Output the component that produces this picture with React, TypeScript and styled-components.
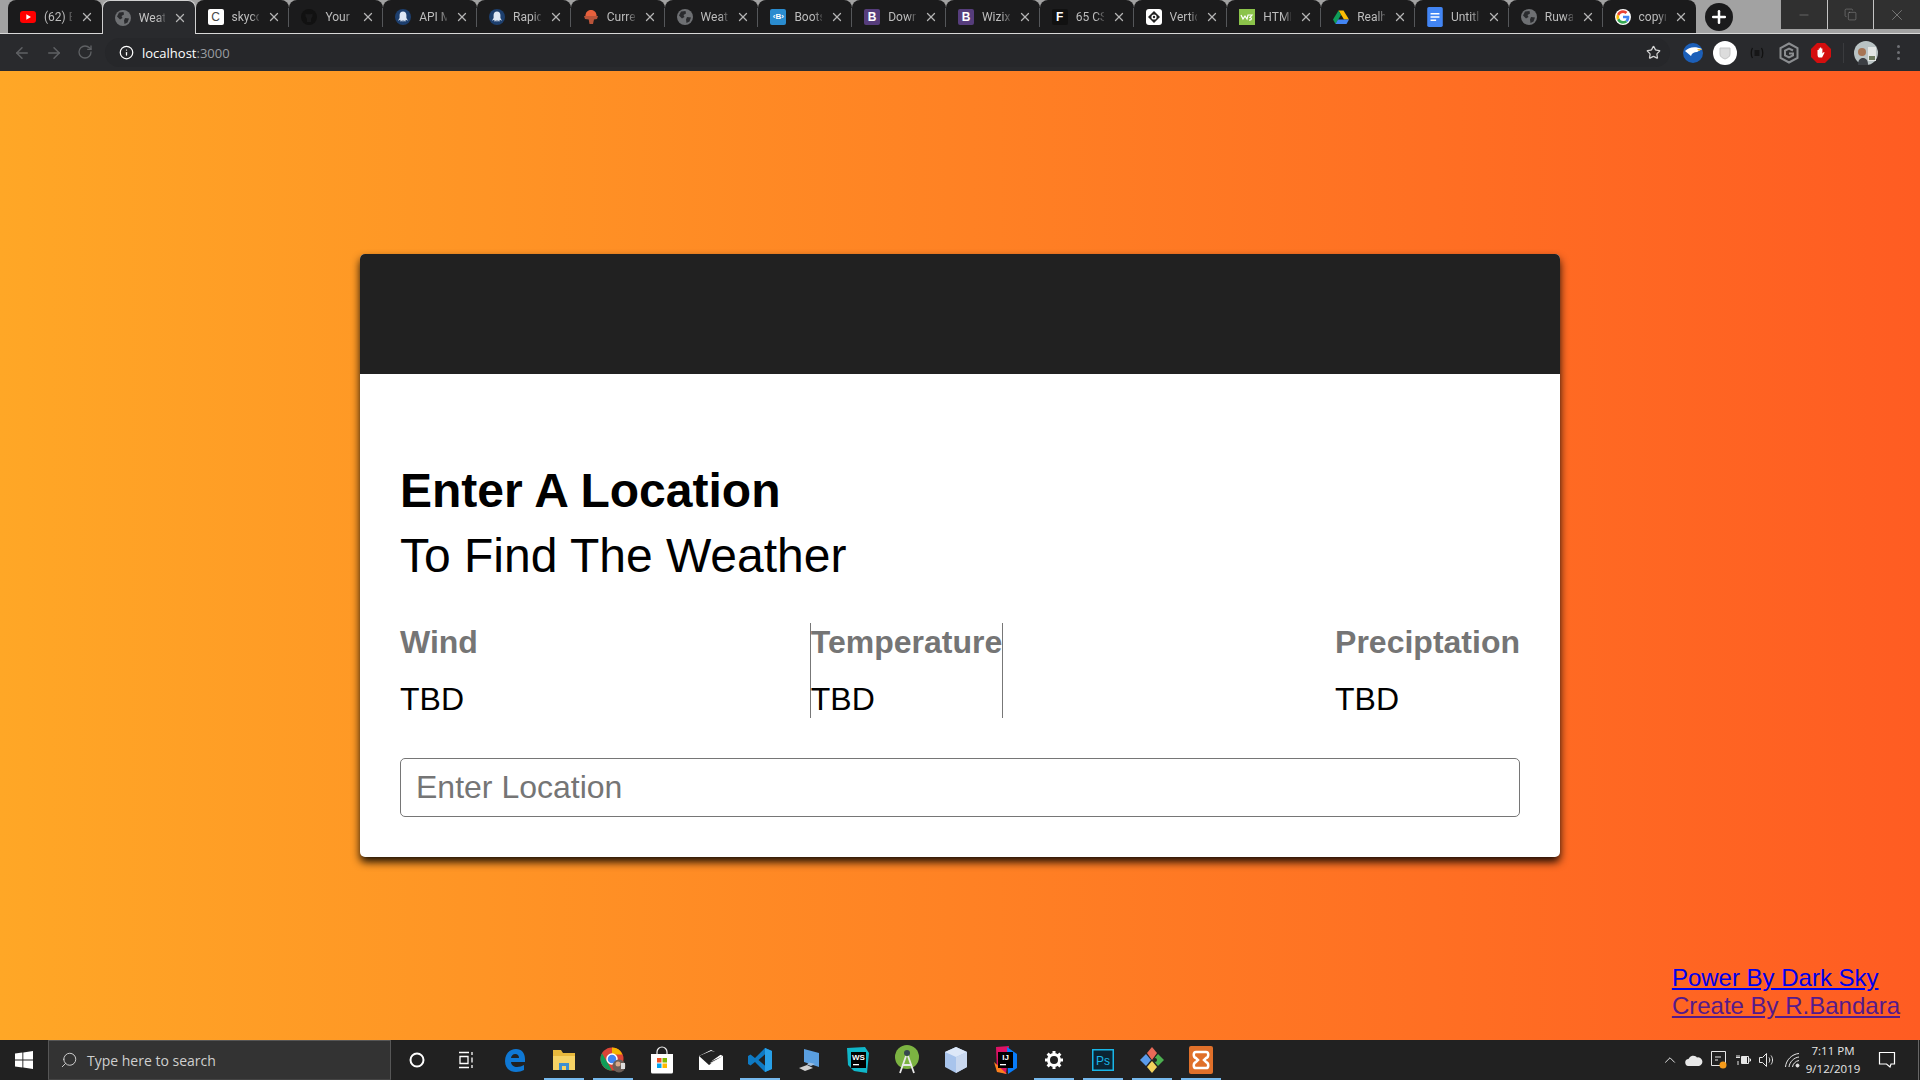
import React from "react";
import styled, { createGlobalStyle } from "styled-components";
import { ArrowLeft, ArrowRight, ChevronUp, Info, Minus, Plus, RotateCw, Search, Star, X, Copy } from "lucide-react";

const GlobalStyle = createGlobalStyle`
  html, body {
    margin: 0;
    height: 100%;
    overflow: hidden;
  }
  #root {
    height: 100%;
  }
`;

const Shell = styled.div`
  display: flex;
  flex-direction: column;
  height: 100vh;
  font-family: "Liberation Sans", Arial, sans-serif;
`;

/* browser chrome */

const TabStrip = styled.div`
  display: flex;
  align-items: stretch;
  height: 33px;
  padding-left: 8px;
  background: #a2a2a2;
  border-bottom: 1px solid #d8d8d8;
`;

const Tab = styled.div<{ $active?: boolean; $noDivider?: boolean }>`
  position: relative;
  box-sizing: border-box;
  display: flex;
  align-items: center;
  flex: 0 0 93.8px;
  min-width: 0;
  gap: 8px;
  padding: 0 8px 0 12px;
  margin-bottom: ${(p) => (p.$active ? "-1px" : "0")};
  border-radius: 8px 8px 0 0;
  background: ${(p) => (p.$active ? "#292a2d" : "#1b1b1c")};
  border: ${(p) => (p.$active ? "1px solid #d0d0d0" : "none")};
  border-bottom: none;
  color: ${(p) => (p.$active ? "#c4c4c4" : "#bdbdbd")};
  font-family: Roboto, sans-serif;
  font-size: 12px;

  &::after {
    content: "";
    display: ${(p) => (p.$active || p.$noDivider ? "none" : "block")};
    position: absolute;
    right: 0;
    top: 8px;
    bottom: 6px;
    width: 1px;
    background: #55575a;
  }
`;

const TabTitle = styled.span`
  flex: 1;
  min-width: 0;
  white-space: nowrap;
  -webkit-mask-image: linear-gradient(to right, #000 70%, rgba(0, 0, 0, 0.25) 100%);
  mask-image: linear-gradient(to right, #000 70%, rgba(0, 0, 0, 0.25) 100%);
`;

const TabClose = styled(X)`
  flex: none;
  width: 14px;
  height: 14px;
  color: #b4b4b4;
`;

const NewTab = styled.div`
  flex: none;
  display: flex;
  align-items: center;
  justify-content: center;
  width: 28px;
  height: 28px;
  margin: 3px 0 0 9px;
  border-radius: 50%;
  background: #1b1b1c;
  color: #fff;
`;

const WindowControls = styled.div`
  flex: none;
  display: flex;
  margin-left: auto;
  height: 29px;
  background: #303030;
`;

const WindowButton = styled.div`
  display: flex;
  align-items: center;
  justify-content: center;
  width: 45.6px;
  color: #8b8b8b;

  & + & {
    border-left: 1px solid #c4c4c4;
  }
`;

const Toolbar = styled.div`
  display: flex;
  align-items: center;
  height: 37px;
  background: #292a2d;
  color: #5f6164;
`;

const NavButtons = styled.div`
  display: flex;
  gap: 14px;
  padding-left: 13px;
`;

const Omnibox = styled.div`
  display: flex;
  align-items: center;
  flex: 1;
  gap: 8px;
  height: 29px;
  margin-left: 12px;
  padding: 0 9px 0 14px;
  border-radius: 15px;
  background: #26272a;
  color: #fff;
  font-family: "Open Sans", sans-serif;
  font-size: 13px;
`;

const Port = styled.span`
  color: #9a9da1;
`;

const StarSlot = styled.span`
  display: flex;
  margin-left: auto;
  color: #d4d4d4;
`;

const Extensions = styled.div`
  display: flex;
  align-items: center;
  width: 250px;
  padding-left: 7px;
  box-sizing: border-box;
`;

const ExtensionSlot = styled.span<{ $width?: number }>`
  flex: none;
  display: flex;
  align-items: center;
  justify-content: center;
  width: ${(p) => p.$width ?? 32}px;
`;

const ExtensionDivider = styled.span`
  width: 1px;
  height: 20px;
  background: #3a3b3e;
`;

const MenuDots = styled.span`
  display: flex;
  flex-direction: column;
  gap: 3px;

  i {
    width: 3px;
    height: 3px;
    border-radius: 50%;
    background: #6f7175;
  }
`;

const LetterIcon = styled.span<{ $bg: string; $fg: string; $light?: boolean; $small?: boolean }>`
  flex: none;
  display: flex;
  align-items: center;
  justify-content: center;
  width: 16px;
  height: 16px;
  border-radius: 2px;
  background: ${(p) => p.$bg};
  color: ${(p) => p.$fg};
  font-family: "Liberation Sans", sans-serif;
  font-size: ${(p) => (p.$small ? "8px" : "12px")};
  font-weight: ${(p) => (p.$light ? 400 : 700)};
`;

/* weather page */

const Page = styled.main`
  position: relative;
  flex: 1;
  display: flex;
  align-items: center;
  justify-content: center;
  background: linear-gradient(to right, #ffa726, #ff5c22);
`;

const Card = styled.section`
  width: 1200px;
  border-radius: 5px;
  background: #fff;
  box-shadow: 0 5px 8px rgba(0, 0, 0, 0.9);
  overflow: hidden;
`;

const CardHeader = styled.header`
  height: 120px;
  background: #212121;
`;

const CardBody = styled.div`
  padding: 84px 40px 40px;
`;

const Heading = styled.h1`
  margin: 0;
  font-size: 48px;
  font-weight: 700;
  line-height: 65px;
  color: #000;
`;

const SubHeading = styled.h2`
  margin: 0;
  font-size: 48px;
  font-weight: 400;
  line-height: 65px;
  color: #000;
`;

const Stats = styled.div`
  display: flex;
  justify-content: space-between;
  margin-top: 35px;
`;

const Stat = styled.div<{ $divided?: boolean }>`
  padding: 0;
  border-left: ${(p) => (p.$divided ? "1px solid #777" : "none")};
  border-right: ${(p) => (p.$divided ? "1px solid #777" : "none")};
`;

const StatLabel = styled.div`
  height: 57px;
  line-height: 38px;
  font-size: 32px;
  font-weight: 700;
  color: #757575;
`;

const StatValue = styled.div`
  height: 38px;
  line-height: 38px;
  font-size: 32px;
  color: #000;
`;

const LocationInput = styled.input`
  display: block;
  box-sizing: border-box;
  width: 100%;
  height: 59px;
  margin-top: 40px;
  padding: 0 15px;
  border: 1px solid #767676;
  border-radius: 5px;
  font-family: inherit;
  font-size: 32px;

  &::placeholder {
    color: #757575;
  }
`;

const Credits = styled.div`
  position: absolute;
  right: 20px;
  bottom: 20px;
  display: flex;
  flex-direction: column;
  font-size: 24px;
  line-height: 28px;
`;

const CreditLink = styled.a<{ $visited?: boolean }>`
  color: ${(p) => (p.$visited ? "#551a8b" : "#0000ee")};
`;

/* windows taskbar */

const Taskbar = styled.footer`
  display: flex;
  align-items: stretch;
  height: 40px;
  background: #212121;
  color: #fff;
  font-family: "Open Sans", sans-serif;
`;

const StartButton = styled.div`
  display: flex;
  align-items: center;
  justify-content: center;
  width: 48px;
`;

const SearchBox = styled.div`
  box-sizing: border-box;
  display: flex;
  align-items: center;
  gap: 9px;
  width: 343px;
  padding-left: 11px;
  background: #333;
  border: 1px solid #565656;
  border-bottom-color: #444;
  color: #cfcfcf;
  font-size: 14px;
`;

const TaskIcons = styled.div`
  display: flex;
  margin-left: 1px;
`;

const TaskButton = styled.div<{ $running?: boolean }>`
  display: flex;
  align-items: center;
  justify-content: center;
  width: 40px;
  margin: 0 4.5px;
  box-sizing: border-box;
  padding-top: 2px;
  border-bottom: 2px solid ${(p) => (p.$running ? "#76b9ed" : "transparent")};
`;

const Tray = styled.div`
  display: flex;
  align-items: center;
  margin-left: auto;
`;

const TrayIcon = styled.span`
  display: flex;
  justify-content: center;
  width: 24.4px;
  color: #e6e6e6;
`;

const Clock = styled.div`
  width: 58px;
  text-align: center;
  font-size: 11.5px;
  line-height: 18px;
  color: #e6e6e6;
`;

const NotifySlot = styled.span`
  display: flex;
  justify-content: center;
  width: 32px;
  margin: 0 15px 0 9px;
`;

const ShowDesktop = styled.span`
  box-sizing: border-box;
  align-self: stretch;
  width: 2px;
  border-left: 1px solid #666;
`;

const Globe = ({ size = 16 }: { size?: number }) => (
  <svg width={size} height={size} viewBox="0 0 16 16" style={{ flex: "none" }}>
    <circle cx="8" cy="8" r="8" fill="#6e7073" />
    <path d="M4 2.5 8.5 2 9 4.5 6.5 6 7.5 8 5 9.5 2 6.5ZM10 8l4 .5-1.5 4L9.5 14 9 10.5Z" fill="#2a2b2e" />
  </svg>
);

const Ghost = () => (
  <svg width="16" height="16" viewBox="0 0 16 16" style={{ flex: "none" }}>
    <circle cx="8" cy="8" r="8" fill="#1d3f6e" />
    <path d="M8 2.5c2.2 0 3.4 1.7 3.4 3.6v3l1.6 2.6-2.2-1-.7 2.3L8.8 11 8 13.2 7.2 11l-1.3 2-.7-2.3-2.2 1 1.6-2.6v-3C4.6 4.2 5.8 2.5 8 2.5Z" fill="#dfe8f5" />
  </svg>
);

function TabIcon({ kind }: { kind: string }) {
  switch (kind) {
    case "youtube":
      return (
        <svg width="16" height="16" viewBox="0 0 16 16" style={{ flex: "none" }}>
          <rect y="2" width="16" height="12" rx="3" fill="#f00" />
          <path d="M6.3 5.2 11 8l-4.7 2.8Z" fill="#fff" />
        </svg>
      );
    case "github":
      return (
        <svg width="16" height="16" viewBox="0 0 16 16" style={{ flex: "none" }}>
          <circle cx="8" cy="8" r="8" fill="#111" />
          <path d="M4.5 4.5 6 5.3h4l1.5-.8v3L10 10v3H6v-3L4.5 7.5Z" fill="#1b1b1c" />
        </svg>
      );
    case "ghost":
      return <Ghost />;
    case "currency":
      return (
        <svg width="16" height="16" viewBox="0 0 16 16" style={{ flex: "none" }}>
          <path d="M8 1c3.4 0 5.6 2.6 5.6 6H2.400C2.400 3.600 4.600 1 8 1Z" fill="#e8603c" />
          <path d="M1 7h14l-1 3-3 .5L10 15H6.500l-.8-4.500L2 10Z" fill="#b9543a" />
        </svg>
      );
    case "skyc":
      return <LetterIcon $bg="#fff" $fg="#444" $light>C</LetterIcon>;
    case "bootstrap":
      return <LetterIcon $bg="#2a8ccf" $fg="#fff" $small>‹B›</LetterIcon>;
    case "b":
      return <LetterIcon $bg="#563d7c" $fg="#fff">B</LetterIcon>;
    case "f":
      return <LetterIcon $bg="#111" $fg="#fff">F</LetterIcon>;
    case "vertic":
      return (
        <svg width="16" height="16" viewBox="0 0 16 16" style={{ flex: "none" }}>
          <rect width="16" height="16" rx="3" fill="#fff" />
          <path d="M8 2 14 8 8 14 2 8Z" fill="#222" />
          <circle cx="8" cy="8" r="2.600" fill="#fff" />
          <circle cx="8" cy="8" r="1.200" fill="#222" />
        </svg>
      );
    case "w3":
      return (
        <svg width="16" height="16" viewBox="0 0 16 16" style={{ flex: "none" }}>
          <rect width="16" height="16" fill="#8bc34a" />
          <path d="M2 6 4 10l2-3 2 3 1-4h4l-2 2.500c2 0 2 3-1 2.500" fill="none" stroke="#fff" strokeWidth="1.200" />
        </svg>
      );
    case "drive":
      return (
        <svg width="16" height="16" viewBox="0 0 16 16" style={{ flex: "none" }}>
          <path d="M5.500 1.500h5L16 10.500h-5Z" fill="#fbbc04" />
          <path d="M5.500 1.500 0 10.500 2.500 15 8 6Z" fill="#0f9d58" />
          <path d="M5 10.500h11L13.500 15h-11Z" fill="#4285f4" />
        </svg>
      );
    case "docs":
      return (
        <svg width="16" height="20" viewBox="0 0 14 18" style={{ flex: "none" }}>
          <rect width="14" height="18" rx="1.500" fill="#4285f4" />
          <path d="M3 6h8M3 9h8M3 12h5" stroke="#fff" strokeWidth="1.400" />
        </svg>
      );
    case "google":
      return (
        <svg width="16" height="16" viewBox="0 0 48 48" style={{ flex: "none" }}>
          <circle cx="24" cy="24" r="24" fill="#fff" />
          <path d="M43 24.500c0-1.400-.1-2.700-.4-4H24v7.600h10.800c-.5 2.500-1.900 4.600-4 6l6.300 4.900c3.700-3.400 5.900-8.500 5.900-14.500Z" fill="#4285f4" />
          <path d="M24 44c5.300 0 9.800-1.800 13.100-4.900l-6.300-4.900c-1.800 1.200-4.100 1.900-6.800 1.900-5.200 0-9.600-3.500-11.200-8.200L6.300 32.800C9.500 39.400 16.200 44 24 44Z" fill="#34a853" />
          <path d="M12.800 27.900c-.8-2.500-.8-5.300 0-7.800l-6.500-5c-2.800 5.500-2.800 12.300 0 17.800Z" fill="#fbbc05" />
          <path d="M24 12c2.900 0 5.500 1 7.500 2.900l5.600-5.600C33.700 6.100 29.200 4 24 4 16.200 4 9.500 8.600 6.300 15.100l6.500 5C14.400 15.500 18.800 12 24 12Z" fill="#ea4335" />
        </svg>
      );
    default:
      return <Globe />;
  }
}

const tabs = [
  { kind: "youtube", title: "(62) B" },
  { kind: "globe", title: "Weat", active: true },
  { kind: "skyc", title: "skyco" },
  { kind: "github", title: "Your" },
  { kind: "ghost", title: "API M" },
  { kind: "ghost", title: "Rapid" },
  { kind: "currency", title: "Curre" },
  { kind: "globe", title: "Weat" },
  { kind: "bootstrap", title: "Boots" },
  { kind: "b", title: "Down" },
  { kind: "b", title: "Wizix" },
  { kind: "f", title: "65 CS" },
  { kind: "vertic", title: "Vertic" },
  { kind: "w3", title: "HTML" },
  { kind: "drive", title: "Realh" },
  { kind: "docs", title: "Untitl" },
  { kind: "globe", title: "Ruwa" },
  { kind: "google", title: "copyr" },
];

const taskApps: { icon: React.ReactNode; running?: boolean }[] = [
  { icon: <svg width="20" height="20" viewBox="0 0 20 20"><circle cx="10" cy="10" r="6.500" fill="none" stroke="#fff" strokeWidth="2" /></svg> },
  {
    icon: (
      <svg width="18" height="18" viewBox="0 0 18 18" fill="none" stroke="#fff" strokeWidth="1.300">
        <path d="M2 1.500h10M2 16.500h10M3 5.500h8v7H3ZM15 1v3M15 6.500v5M15 14v3" />
      </svg>
    ),
  },
  {
    icon: (
      <svg width="22" height="24" viewBox="0 0 22 24">
        <path d="M1 13C1 6 5.500 1 12 1c5.600 0 9 4 9 10v3H7c.3 3.500 3 5 6 5 2.500 0 5-.8 7-2v5c-2.200 1.200-5 2-8 2-6.500 0-11-4-11-11Zm6-3h8c0-2.500-1.500-4-3.800-4C8.800 6 7.300 7.800 7 10Z" fill="#0f78d4" />
      </svg>
    ),
  },
  {
    running: true,
    icon: (
      <svg width="24" height="22" viewBox="0 0 24 22">
        <path d="M1 1h8l2 3h12v17H1Z" fill="#e8b93c" />
        <rect x="1" y="7" width="22" height="14" fill="#f6d365" />
        <path d="M7 21v-7h10v7h-3v-4h-4v4Z" fill="#3d8fd1" />
      </svg>
    ),
  },
  {
    running: true,
    icon: (
      <svg width="26" height="26" viewBox="0 0 26 26">
        <circle cx="12" cy="12" r="11.500" fill="#db4437" />
        <path d="M12 23.500A11.500 11.500 0 0 1 2 6.300L8 16.500Z" fill="#0f9d58" />
        <path d="M12 .5a11.500 11.500 0 0 1 10.500 7H12Z" fill="#f4b400" />
        <circle cx="12" cy="12" r="5" fill="#4285f4" stroke="#fff" strokeWidth="1.500" />
        <circle cx="19" cy="19" r="6.500" fill="#6d5f58" />
        <circle cx="18" cy="17" r="2.500" fill="#d7a98a" />
        <path d="M21 16h4v6h-4Z" fill="#ddd" />
      </svg>
    ),
  },
  {
    icon: (
      <svg width="24" height="28" viewBox="0 0 24 28">
        <path d="M7 9V6a5 5 0 0 1 10 0v3" fill="none" stroke="#eee" strokeWidth="1.200" />
        <path d="M1 8h22v18a1.500 1.500 0 0 1-1.500 1.500h-19A1.500 1.500 0 0 1 1 26Z" fill="#fff" />
        <rect x="7" y="12" width="4.500" height="4.500" fill="#f25022" />
        <rect x="12.500" y="12" width="4.500" height="4.500" fill="#7fba00" />
        <rect x="7" y="17.500" width="4.500" height="4.500" fill="#00a4ef" />
        <rect x="12.500" y="17.500" width="4.500" height="4.500" fill="#ffb900" />
      </svg>
    ),
  },
  {
    icon: (
      <svg width="24" height="20" viewBox="0 0 24 20">
        <path d="M0 6 12 0l12 6v14H0Z" fill="#fff" />
        <path d="M0 6l10 9L24 6 12 11.500 24 3 12 1Z" fill="#212121" />
        <path d="M24 20 11 13l13-7Z" fill="#fff" opacity=".9" />
      </svg>
    ),
  },
  {
    running: true,
    icon: (
      <svg width="24" height="26" viewBox="0 0 24 26">
        <path d="M17 1 24 4v18l-7 3-10-10-4.500 3.500L0 17V9l2.500-1.500L7 11Z" fill="#0e7ac4" />
        <path d="M17 7.500 10.500 13l6.500 5.500Z" fill="#212121" />
        <path d="M17 1 24 4v18l-7 3Z" fill="#28a0e8" />
        <path d="M17 7.500 12 13l5 5.500Z" fill="#212121" />
      </svg>
    ),
  },
  {
    icon: (
      <svg width="24" height="26" viewBox="0 0 24 26">
        <path d="M7 2 22 6v14L7 15Z" fill="#5a9fe0" />
        <path d="M2 21l8-3 6 3-8 3Z" fill="#cfcfcf" />
        <path d="M12 15.500 18 17l-4 2-4-1.500Z" fill="#9fbfe0" />
      </svg>
    ),
  },
  {
    icon: (
      <svg width="24" height="28" viewBox="0 0 24 28">
        <path d="M1 2l18-1 4 6-2 20-13-2-6-6Z" fill="#10b7c9" />
        <rect x="5" y="6" width="15" height="16" fill="#000" />
        <text x="12.500" y="14" fontFamily="Liberation Sans" fontSize="8" fontWeight="700" fill="#fff" textAnchor="middle">WS</text>
        <rect x="7" y="18" width="6" height="1.300" fill="#fff" />
      </svg>
    ),
  },
  {
    icon: (
      <svg width="24" height="30" viewBox="0 0 24 30">
        <circle cx="12" cy="12" r="12" fill="#7cb342" />
        <circle cx="12" cy="8" r="3" fill="#37474f" />
        <path d="M11 11 5 28M13 11l6 17M7 20h10" stroke="#e8e8e8" strokeWidth="1.800" fill="none" />
      </svg>
    ),
  },
  {
    icon: (
      <svg width="22" height="26" viewBox="0 0 22 26">
        <path d="M11 0 22 5v15l-11 6L0 20V5Z" fill="#a8c4ec" />
        <path d="M11 0 22 5 11 10 0 5Z" fill="#dde8f8" />
        <path d="M11 10 22 5v15l-11 6Z" fill="#c9d8ef" />
      </svg>
    ),
  },
  {
    icon: (
      <svg width="24" height="28" viewBox="0 0 24 28">
        <path d="M3 1 16 0l-3 28-9-3Z" fill="#dd1265" />
        <path d="M14 1 24 8v14l-9 6Z" fill="#087cfa" />
        <path d="M1 16 14 28l-10-2Z" fill="#fc801d" />
        <rect x="5" y="6" width="15" height="16" fill="#000" />
        <text x="12.500" y="14" fontFamily="Liberation Sans" fontSize="8" fontWeight="700" fill="#fff" textAnchor="middle">IJ</text>
        <rect x="7" y="18" width="6" height="1.300" fill="#fff" />
      </svg>
    ),
  },
  {
    running: true,
    icon: (
      <svg width="20" height="20" viewBox="0 0 20 20">
        <circle cx="10" cy="10" r="5.500" fill="none" stroke="#fff" strokeWidth="3" />
        <path d="M10 1v3M10 16v3M1 10h3M16 10h3M3.600 3.600l2.200 2.200M14.200 14.200l2.200 2.200M3.600 16.400l2.200-2.200M14.200 5.800l2.200-2.200" stroke="#fff" strokeWidth="3" />
      </svg>
    ),
  },
  {
    running: true,
    icon: (
      <svg width="22" height="22" viewBox="0 0 22 22">
        <rect x=".75" y=".75" width="20.500" height="20.500" fill="#0b2433" stroke="#19b6e8" strokeWidth="1.500" />
        <text x="11" y="15.500" fontFamily="Liberation Sans" fontSize="12" fill="#19b6e8" textAnchor="middle">Ps</text>
      </svg>
    ),
  },
  {
    running: true,
    icon: (
      <svg width="24" height="26" viewBox="0 0 24 26">
        <path d="M12 0 17 6l-5 7-5-7Z" fill="#e86a58" />
        <path d="M6 7 0 13l6 6 5-6Z" fill="#5a9bea" />
        <path d="M18 7l6 6-6 6-5-6Z" fill="#4caf50" />
        <path d="M12 14l5 6-5 6-5-6Z" fill="#f2d15c" />
        <circle cx="15" cy="13" r="2" fill="#212121" />
      </svg>
    ),
  },
  {
    running: true,
    icon: (
      <svg width="24" height="28" viewBox="0 0 24 28">
        <rect width="24" height="28" rx="2" fill="#e0702a" />
        <path d="M7 6h10c3 0 3 5 0 6l-2 2 2 2c3 1 3 6 0 6H7c-3 0-3-5 0-6l2-2-2-2c-3-1-3-6 0-6Z" fill="none" stroke="#fff" strokeWidth="2.500" />
      </svg>
    ),
  },
];

function BrowserChrome() {
  return (
    <>
      <TabStrip>
        {tabs.map((tab, i) => (
          <Tab
            key={i}
            $active={tab.active}
            $noDivider={i === tabs.length - 1 || tabs[i + 1]?.active}
          >
            <TabIcon kind={tab.kind} />
            <TabTitle>{tab.title}</TabTitle>
            <TabClose strokeWidth={2.200} />
          </Tab>
        ))}
        <NewTab>
          <Plus size={20} strokeWidth={3} />
        </NewTab>
        <WindowControls>
          <WindowButton><Minus size={14} strokeWidth={1} /></WindowButton>
          <WindowButton><Copy size={13} strokeWidth={1} /></WindowButton>
          <WindowButton><X size={18} strokeWidth={1} /></WindowButton>
        </WindowControls>
      </TabStrip>
      <Toolbar>
        <NavButtons>
          <ArrowLeft size={18} />
          <ArrowRight size={18} />
          <RotateCw size={16} />
        </NavButtons>
        <Omnibox>
          <Info size={15} color="#fff" />
          <span>
            localhost<Port>:3000</Port>
          </span>
          <StarSlot><Star size={15} /></StarSlot>
        </Omnibox>
        <Extensions>
          <ExtensionSlot>
            <svg width="20" height="20" viewBox="0 0 20 20">
              <circle cx="10" cy="10" r="10" fill="#1c5fb8" />
              <path d="M2 8c4-4 10-5 17-2l-5 3c-3 0-5 1-6 4C6 11 4 10 2 8Z" fill="#fff" />
              <path d="M14 6l5 0-3 2Z" fill="#f2b632" />
            </svg>
          </ExtensionSlot>
          <ExtensionSlot>
            <svg width="24" height="24" viewBox="0 0 24 24">
              <circle cx="12" cy="12" r="12" fill="#fff" />
              <path d="M7 7h10v6c0 3-2.500 4-5 5-2.500-1-5-2-5-5Z" fill="#dcdcdc" stroke="#c4c4c4" />
            </svg>
          </ExtensionSlot>
          <ExtensionSlot>
            <svg width="14" height="12" viewBox="0 0 14 12" fill="none" stroke="#111" strokeWidth="1.300">
              <path d="M2.500 1C.8 3.500.8 8.500 2.500 11M11.500 1c1.700 2.500 1.700 7.500 0 10M4.500 4h5M4.500 6h5M4.500 8h5" />
            </svg>
          </ExtensionSlot>
          <ExtensionSlot>
            <svg width="20" height="22" viewBox="0 0 20 22" fill="none" stroke="#8b8d90" strokeWidth="2">
              <path d="M10 1.500 18.500 6v10L10 20.500 1.500 16V6Z" />
              <path d="M14 8.500 10 6.500 6 8.500v5l4 2 4-2v-2h-4" />
            </svg>
          </ExtensionSlot>
          <ExtensionSlot>
            <svg width="20" height="20" viewBox="0 0 20 20">
              <path d="M6 0h8l6 6v8l-6 6H6l-6-6V6Z" fill="#d40e0e" />
              <path d="M6.500 11V7h1.200v3V5.500h1.200V10V4.500h1.300V10V5.500h1.200V10.500l1.400-1.500.8.600-2.500 5H8c-1 0-1.500-1.500-1.500-3.600Z" fill="#fff" />
            </svg>
          </ExtensionSlot>
          <ExtensionSlot $width={12}>
            <ExtensionDivider />
          </ExtensionSlot>
          <ExtensionSlot $width={34}>
            <svg width="24" height="24" viewBox="0 0 24 24">
              <circle cx="12" cy="12" r="12" fill="#b9c3c4" />
              <circle cx="8" cy="11" r="4" fill="#a67454" />
              <path d="M4 24c0-5 2-7 5-7s5 2 5 7Z" fill="#3c3f44" />
              <path d="M14 6h8v14h-8Z" fill="#e2e5e4" />
              <path d="M15 15h6v4h-6Z" fill="#6d7a5e" />
            </svg>
          </ExtensionSlot>
          <ExtensionSlot $width={30}>
            <MenuDots><i /><i /><i /></MenuDots>
          </ExtensionSlot>
        </Extensions>
      </Toolbar>
    </>
  );
}

function WindowsTaskbar() {
  return (
    <Taskbar>
      <StartButton>
        <svg width="18" height="18" viewBox="0 0 18 18" fill="#fff">
          <path d="M0 2.600 7.400 1.500v7H0ZM8.300 1.400 18 0v8.500H8.300ZM0 9.500h7.400v7L0 15.400ZM8.300 9.500H18V18l-9.700-1.400Z" />
        </svg>
      </StartButton>
      <SearchBox>
        <Search size={18} strokeWidth={1.300} style={{ transform: "scaleX(-1)" }} />
        Type here to search
      </SearchBox>
      <TaskIcons>
        {taskApps.map((app, i) => (
          <TaskButton key={i} $running={app.running}>
            {app.icon}
          </TaskButton>
        ))}
      </TaskIcons>
      <Tray>
        <TrayIcon><ChevronUp size={18} strokeWidth={1.300} /></TrayIcon>
        <TrayIcon>
          <svg width="18" height="12" viewBox="0 0 18 12">
            <path d="M4 12a3.500 3.500 0 0 1-.5-7A5 5 0 0 1 12 3.500 4.300 4.300 0 0 1 14 12Z" fill="#e8e8e8" />
          </svg>
        </TrayIcon>
        <TrayIcon>
          <svg width="18" height="20" viewBox="0 0 18 20">
            <path d="M1.500 1.500h14v14h-14Z" fill="none" stroke="#e6e6e6" />
            <path d="M5 7h6M5 10h3" stroke="#e6e6e6" />
            <circle cx="13" cy="15" r="3.500" fill="#f59b1a" />
          </svg>
        </TrayIcon>
        <TrayIcon>
          <svg width="16" height="14" viewBox="0 0 16 14" fill="none" stroke="#e6e6e6">
            <path d="M6.500 3.500h7v7h-7ZM14 6h1.500v2H14M1 4.500h4M2 2v2.500M4 2v2.500M3 8v4" />
            <rect x="7.500" y="4.500" width="4" height="5" fill="#e6e6e6" />
          </svg>
        </TrayIcon>
        <TrayIcon>
          <svg width="18" height="16" viewBox="0 0 18 16" fill="none" stroke="#e6e6e6">
            <path d="M1.500 5.500h3l4-4v13l-4-4h-3ZM11 5.500c1 1.500 1 3.500 0 5M13 3.500c2 2.500 2 6.500 0 9" />
          </svg>
        </TrayIcon>
        <TrayIcon>
          <svg width="16" height="16" viewBox="0 0 16 16" fill="none" stroke="#e6e6e6">
            <path d="M1.500 15C2 8 8 2 15 1.500M5 15c.5-5 5-9.500 10-10M8.500 15c.3-3 3-6 6.500-6.500" />
            <circle cx="13.500" cy="13.500" r="1.500" fill="#e6e6e6" />
          </svg>
        </TrayIcon>
        <Clock>
          7:11 PM
          <br />
          9/12/2019
        </Clock>
        <NotifySlot>
          <svg width="18" height="18" viewBox="0 0 18 18" fill="none" stroke="#fff" strokeWidth="1.200">
            <path d="M1.500 1.500h15v11.500h-3.500l-1 3-3.500-3H1.500Z" />
          </svg>
        </NotifySlot>
        <ShowDesktop />
      </Tray>
    </Taskbar>
  );
}

export default function App() {
  const stats = [
    { label: "Wind" },
    { label: "Temperature", divided: true },
    { label: "Preciptation" },
  ];

  return (
    <Shell>
      <GlobalStyle />
      <BrowserChrome />
      <Page>
        <Card>
          <CardHeader />
          <CardBody>
            <Heading>Enter A Location</Heading>
            <SubHeading>To Find The Weather</SubHeading>
            <Stats>
              {stats.map((stat) => (
                <Stat key={stat.label} $divided={stat.divided}>
                  <StatLabel>{stat.label}</StatLabel>
                  <StatValue>TBD</StatValue>
                </Stat>
              ))}
            </Stats>
            <LocationInput placeholder="Enter Location" />
          </CardBody>
        </Card>
        <Credits>
          <CreditLink href="#">Power By Dark Sky</CreditLink>
          <CreditLink href="#" $visited>Create By R.Bandara</CreditLink>
        </Credits>
      </Page>
      <WindowsTaskbar />
    </Shell>
  );
}
